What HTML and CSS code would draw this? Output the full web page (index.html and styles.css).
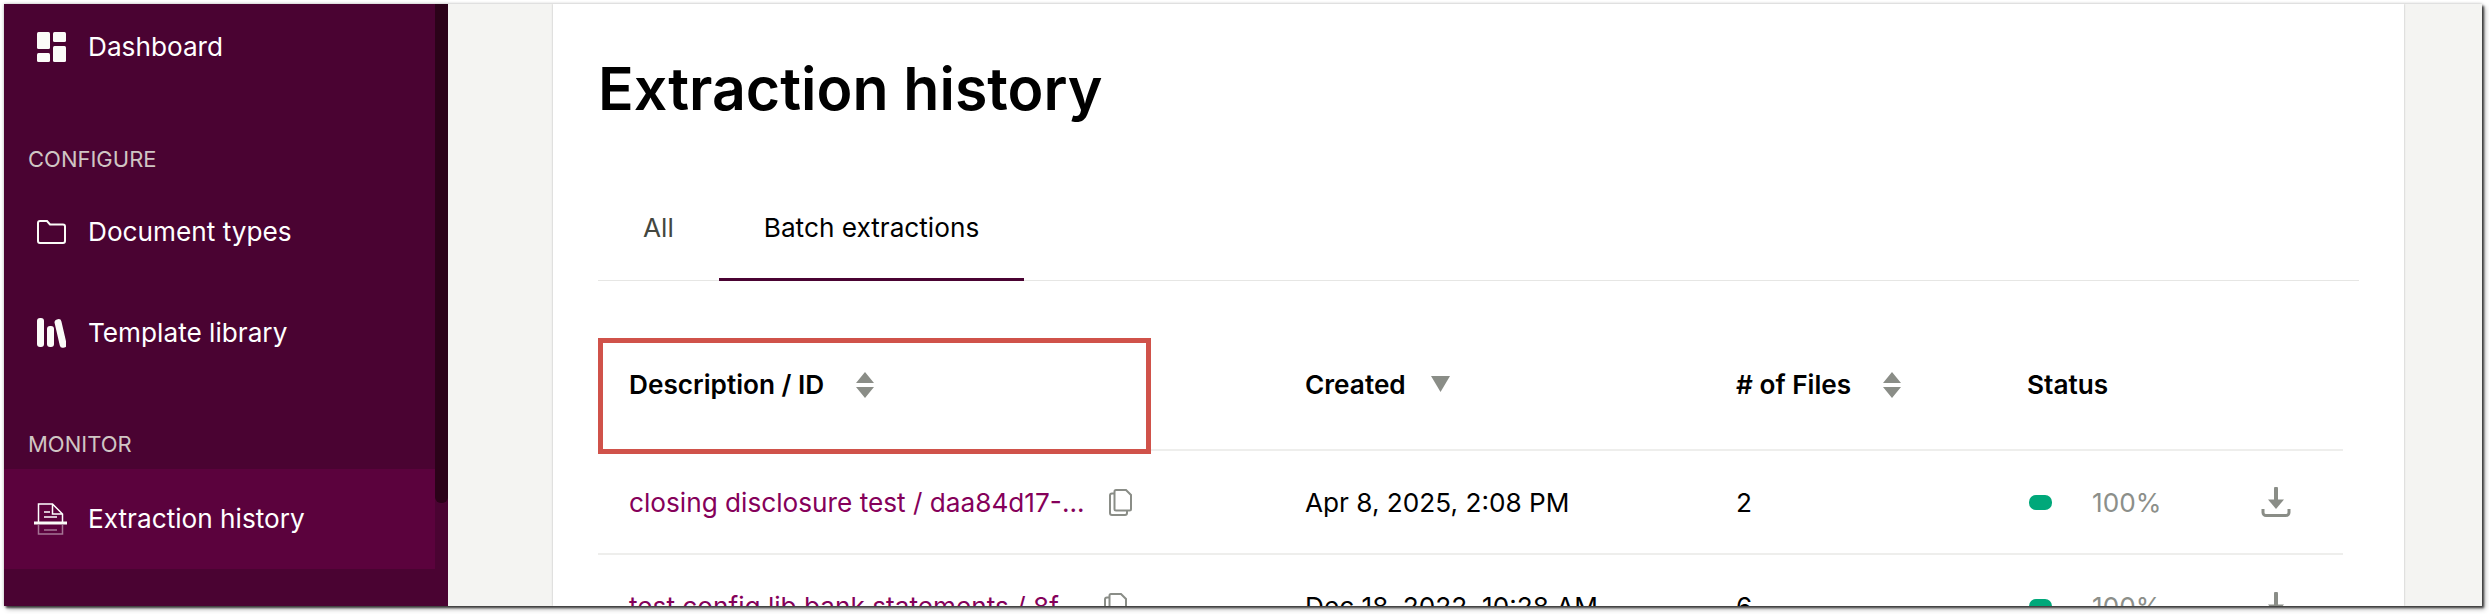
FILE: index.html
```html
<!DOCTYPE html>
<html lang="en">
<head>
<meta charset="utf-8">
<title>Extraction history</title>
<link rel="stylesheet" href="styles.css">
</head>
<body>
<div class="frame">
  <aside class="sidebar">
    <nav class="nav">
      <a class="item item-first">
        <svg class="icon" viewBox="0 0 29 30"><rect x="0" y="0" width="13" height="17" rx="1.500"/><rect x="16" y="0" width="13" height="10" rx="1.500"/><rect x="0" y="21" width="13" height="9" rx="1.500"/><rect x="16" y="14" width="13" height="16" rx="1.500"/></svg>
        <span>Dashboard</span>
      </a>
      <div class="section section-configure">CONFIGURE</div>
      <a class="item item-docs">
        <svg class="icon" viewBox="0 0 29 24"><path class="line" d="M1 3a2 2 0 0 1 2-2h7l3 3.500h13a2 2 0 0 1 2 2V21a2 2 0 0 1-2 2H3a2 2 0 0 1-2-2z"/></svg>
        <span>Document types</span>
      </a>
      <a class="item item-template">
        <svg class="icon" viewBox="0 0 29 30"><rect x="0" y="0" width="7" height="29" rx="3"/><rect x="10" y="8" width="7" height="21" rx="3"/><rect x="20" y="1" width="7" height="29" rx="3" transform="rotate(-13 23.500 15)"/></svg>
        <span>Template library</span>
      </a>
      <div class="section section-monitor">MONITOR</div>
      <a class="item item-active">
        <svg class="icon icon-wide" viewBox="0 0 33 32"><path class="thin" d="M4.500 19V1h14l10 10v8M18.500 1v10h10M10 9h6M10 14h13"/><rect x="0" y="18.500" width="33" height="3"/><path class="thin faint" d="M4.500 22v9h24v-9M10 27h13"/></svg>
        <span>Extraction history</span>
      </a>
    </nav>
    <div class="thumb"></div>
  </aside>
  <main class="main">
    <section class="card">
      <h1 class="title">Extraction history</h1>
      <div class="tabs">
        <a class="tab">All</a>
        <a class="tab tab-active">Batch extractions</a>
      </div>
      <table class="table">
        <colgroup><col class="c1"><col class="c2"><col class="c3"><col class="c4"><col class="c5"></colgroup>
        <thead>
          <tr>
            <th><div class="th">Description / ID
              <svg class="sort" viewBox="0 0 18 26"><path d="M9 0l9 11H0zM9 26L0 15h18z"/></svg></div>
              <div class="callout"></div>
            </th>
            <th><div class="th">Created
              <svg class="sort sort-one" viewBox="0 0 19 16"><path d="M0 0h19L9.500 16z"/></svg></div></th>
            <th><div class="th"># of Files
              <svg class="sort" viewBox="0 0 18 26"><path d="M9 0l9 11H0zM9 26L0 15h18z"/></svg></div></th>
            <th><div class="th">Status</div></th>
            <th></th>
          </tr>
        </thead>
        <tbody>
          <tr>
            <td><div class="desc"><a class="link">closing disclosure test / daa84d17-...</a>
              <svg class="copy" viewBox="0 0 23 27"><path d="M7 1h10l5 5v14a1.500 1.500 0 0 1-1.500 1.500H7A1.500 1.500 0 0 1 5.500 20V2.500A1.500 1.500 0 0 1 7 1z"/><path d="M5 4.500H3A2 2 0 0 0 1 6.500V24a2 2 0 0 0 2 2h13a2 2 0 0 0 2-2v-2"/></svg></div></td>
            <td>Apr 8, 2025, 2:08 PM</td>
            <td>2</td>
            <td><div class="status"><i class="pill"></i><span class="pct">100%</span></div></td>
            <td><svg class="dl" viewBox="0 0 30 30"><path class="dl-stem" d="M15 1.500V15"/><path class="dl-head" d="M7 12.500h16L15 22z"/><path class="dl-tray" d="M2 22v3.500A3 3 0 0 0 5 28.500h20a3 3 0 0 0 3-3V22"/></svg></td>
          </tr>
          <tr>
            <td><div class="desc"><a class="link">test config lib bank statements / 8f...</a>
              <svg class="copy" viewBox="0 0 23 27"><path d="M7 1h10l5 5v14a1.500 1.500 0 0 1-1.500 1.500H7A1.500 1.500 0 0 1 5.500 20V2.500A1.500 1.500 0 0 1 7 1z"/><path d="M5 4.500H3A2 2 0 0 0 1 6.500V24a2 2 0 0 0 2 2h13a2 2 0 0 0 2-2v-2"/></svg></div></td>
            <td>Dec 18, 2022, 10:28 AM</td>
            <td>6</td>
            <td><div class="status"><i class="pill"></i><span class="pct">100%</span></div></td>
            <td><svg class="dl" viewBox="0 0 30 30"><path class="dl-stem" d="M15 1.500V15"/><path class="dl-head" d="M7 12.500h16L15 22z"/><path class="dl-tray" d="M2 22v3.500A3 3 0 0 0 5 28.500h20a3 3 0 0 0 3-3V22"/></svg></td>
          </tr>
        </tbody>
      </table>
    </section>
  </main>
</div>
</body>
</html>
```

FILE: styles.css
```css
* { box-sizing: border-box; }
html, body { margin: 0; padding: 0; height: 100%; background: #fff; overflow: hidden; }
body { font-family: Inter, "Liberation Sans", sans-serif; color: #000; }

.frame {
  display: flex;
  width: 2478px;
  height: 602px;
  margin: 4px 0 0 4px;
  overflow: hidden;
  box-shadow: 0 0 3px rgba(0,0,0,.25), 2px 2px 2px rgba(0,0,0,.65), 3px 3px 5px rgba(0,0,0,.3);
}

.sidebar { position: relative; flex: 0 0 444px; height: 100%; background: #4a0332; }
.nav { width: 431px; }
.item {
  display: flex;
  align-items: center;
  height: 100px;
  padding-left: 33px;
  color: #fff;
  font-size: 26.200px;
  line-height: 30px;
}
.item span { margin-left: 22px; }
.item-first { margin-top: -7px; }
.item-docs { margin-top: 10px; }
.item-template { margin-top: 1px; }
.item-active { background: #5b023d; }
.icon { width: 29px; height: 30px; fill: #fbfbf8; flex: none; }
.item-docs .icon { height: 24px; }
.icon .line { fill: none; stroke: #fbfbf8; stroke-width: 2; }
.icon-wide { width: 33px; height: 32px; margin-left: -3px; margin-right: -1px; }
.icon .thin { fill: none; stroke: #fff; stroke-width: 1.500; }
.icon .faint { opacity: .45; }
.section {
  padding-left: 24px;
  color: #d0c6c4;
  font-size: 22px;
  line-height: 26px;
}
.section-configure { margin-top: 49px; }
.section-monitor { margin-top: 48px; margin-bottom: 12px; }
.thumb {
  position: absolute;
  top: 0;
  right: 0;
  width: 13px;
  height: 499px;
  background: #2b0219;
  border-radius: 0 0 6px 6px;
}

.main { flex: 1; display: flex; background: #f4f4f2; padding-left: 105px; }
.card {
  width: 1851px;
  height: 100%;
  background: #fff;
  padding: 0 45px;
  box-shadow: 0 0 2px rgba(0,0,0,.25);
}
.title { margin: 51px 0 0; font-size: 59px; line-height: 68px; font-weight: 600; }
.tabs {
  display: flex;
  align-items: flex-end;
  height: 113px;
  margin-top: 45px;
  border-bottom: 1px solid #e6e6e4;
}
.tab {
  display: flex;
  align-items: center;
  height: 111px;
  padding: 6px 45px 0;
  font-size: 26.200px;
  color: #44473f;
  margin-bottom: -1px;
  border-bottom: 3px solid transparent;
}
.tab-active { color: #000; border-bottom-color: #4a0332; }

.table {
  table-layout: fixed;
  border-collapse: collapse;
  width: 1745px;
}
.c1 { width: 676px; } .c2 { width: 431px; } .c3 { width: 291px; } .c4 { width: 234px; } .c5 { width: 113px; }
th, td {
  padding: 0 0 0 31px;
  text-align: left;
  font-size: 26.200px;
  vertical-align: middle;
}
tbody tr { height: 104px; border-top: 2px solid #eeeeec; }
thead tr { height: 169px; }
th { font-weight: 600; position: relative; vertical-align: top; padding-top: 89px; }
.th { display: flex; align-items: center; height: 30px; line-height: 30px; }
.sort { width: 18px; height: 26px; margin-left: 32px; fill: #8a8d87; flex: none; }
.sort-one { width: 19px; height: 16px; margin-left: 25px; margin-top: -2px; }
.callout {
  position: absolute;
  left: 0;
  top: 57px;
  width: 553px;
  height: 116px;
  border: 5px solid #d0524a;
}
.desc { display: flex; align-items: center; }
.link { color: #85005a; white-space: nowrap; }
.copy { width: 23px; height: 27px; margin-left: 24px; fill: none; stroke: #8a8d87; stroke-width: 2; flex: none; }
.status { display: flex; align-items: center; padding-left: 2px; }
.pill { width: 23px; height: 15px; border-radius: 7px; background: #00a87a; }
.pct { margin-left: 40px; color: #8c8f8a; }
.dl { display: block; width: 30px; height: 30px; }
.dl-stem { stroke: #8a8d87; stroke-width: 4; stroke-linecap: round; fill: none; }
.dl-head { fill: #8a8d87; }
.dl-tray { stroke: #8a8d87; stroke-width: 3; fill: none; }
```
